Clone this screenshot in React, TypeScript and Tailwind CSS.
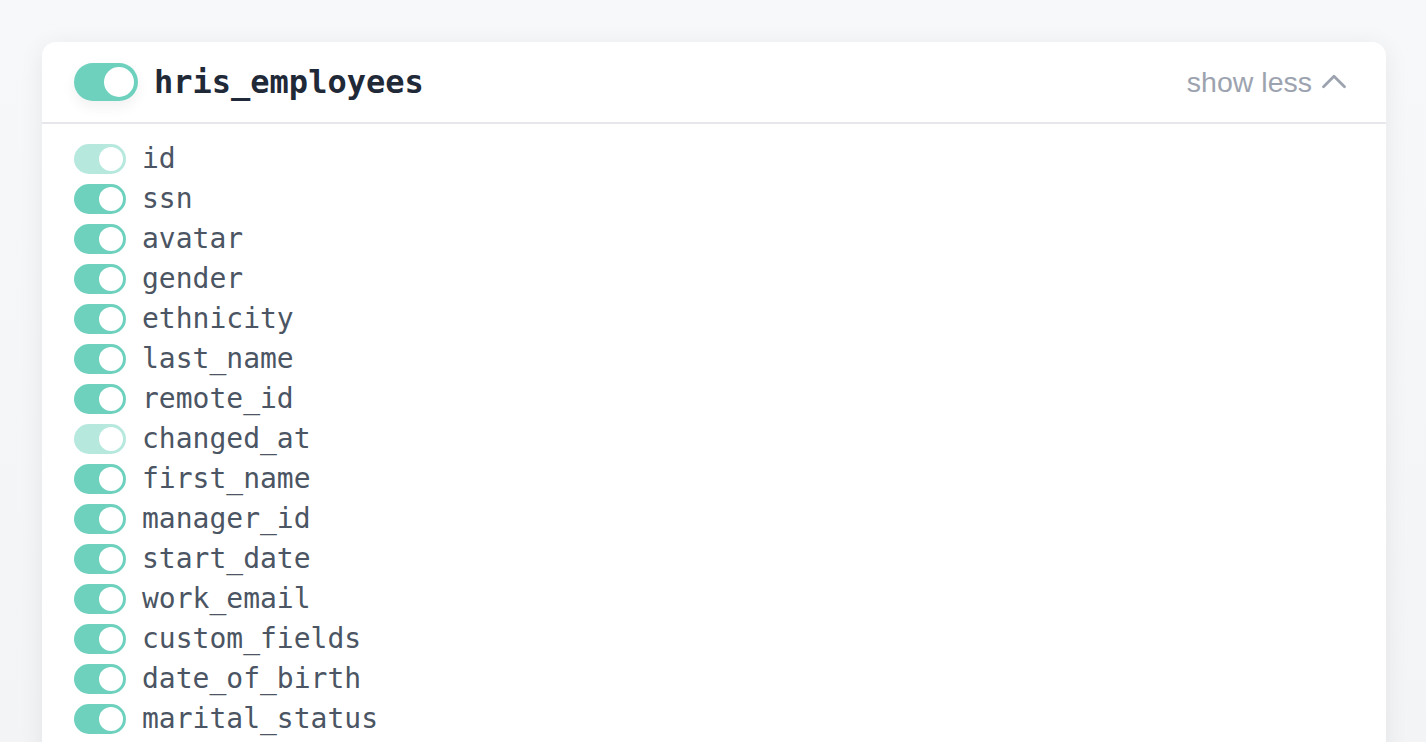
const fields: { name: string; locked?: boolean }[] = [
  { name: "id", locked: true },
  { name: "ssn" },
  { name: "avatar" },
  { name: "gender" },
  { name: "ethnicity" },
  { name: "last_name" },
  { name: "remote_id" },
  { name: "changed_at", locked: true },
  { name: "first_name" },
  { name: "manager_id" },
  { name: "start_date" },
  { name: "work_email" },
  { name: "custom_fields" },
  { name: "date_of_birth" },
  { name: "marital_status" },
];

function Toggle({ big, faded }: { big?: boolean; faded?: boolean }) {
  return (
    <span
      className={
        big
          ? "flex h-[38px] w-16 shrink-0 items-center justify-end rounded-full bg-[#6dd1be] pr-[4px] shadow-[0_6px_14px_rgba(0,0,0,0.06)]"
          : faded
          ? "flex h-[30px] w-[52px] shrink-0 items-center justify-end rounded-full bg-[#b6e8de] pr-[3px]"
          : "flex h-[30px] w-[52px] shrink-0 items-center justify-end rounded-full bg-[#6dd1be] pr-[3px]"
      }
    >
      <span
        className={
          big
            ? "h-[30px] w-[30px] rounded-full bg-white"
            : "h-6 w-6 rounded-full bg-white"
        }
      />
    </span>
  );
}

export default function App() {
  return (
    <div className="min-h-screen bg-gradient-to-b from-[#f7f8fa] to-[#f3f4f6] pl-[42px] pr-[40px] pt-[42px]">
      <div className="rounded-t-[14px] bg-white shadow-[0_4px_24px_rgba(0,0,0,0.07)]">
        <div className="flex h-[82px] items-center justify-between border-b-2 border-[#e5e7eb] pl-8 pr-[38px]">
          <div className="flex items-center gap-4">
            <Toggle big />
            <h2 className="font-['DejaVu_Sans_Mono',monospace] text-[32px] font-bold text-[#1f2937]">
              hris_employees
            </h2>
          </div>
          <button className="flex items-center gap-2 font-['Helvetica','Liberation_Sans',sans-serif] text-[28.5px] text-[#9ca3af]">
            show less
            <svg width="28" height="28" viewBox="0 0 24 24" fill="none" stroke="currentColor" strokeWidth="2.4" strokeLinecap="round" strokeLinejoin="round">
              <path d="M3 16 L12 7 L21 16" />
            </svg>
          </button>
        </div>
        <ul className="flex flex-col gap-[10px] px-8 pt-5 pb-8">
          {fields.map((f) => (
            <li key={f.name} className="flex h-[30px] items-center gap-4">
              <Toggle faded={f.locked} />
              <span className="font-['DejaVu_Sans_Mono',monospace] text-[28px] leading-[30px] text-[#4b5563]">
                {f.name}
              </span>
            </li>
          ))}
        </ul>
      </div>
    </div>
  );
}
